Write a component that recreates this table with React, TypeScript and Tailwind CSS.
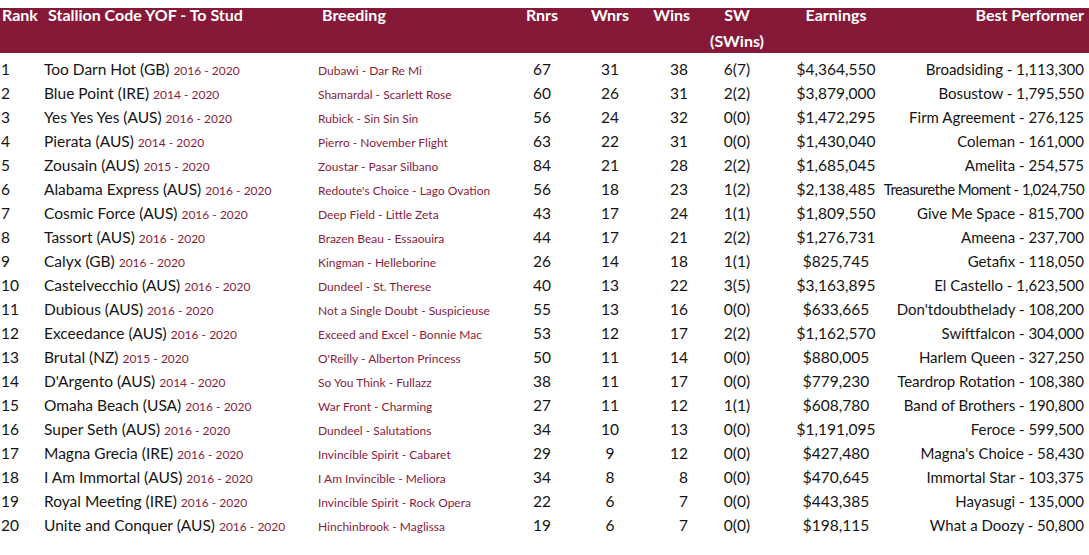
import React from 'react';

interface Row {
  rank: number;
  name: string;
  years: string;
  breeding: string;
  rnrs: number;
  wnrs: number;
  wins: number;
  sw: string;
  earnings: string;
  best: string;
  tight?: boolean;
}

const rows: Row[] = [
  { rank: 1, name: 'Too Darn Hot (GB)', years: '2016 - 2020', breeding: 'Dubawi - Dar Re Mi', rnrs: 67, wnrs: 31, wins: 38, sw: '6(7)', earnings: '$4,364,550', best: 'Broadsiding - 1,113,300' },
  { rank: 2, name: 'Blue Point (IRE)', years: '2014 - 2020', breeding: 'Shamardal - Scarlett Rose', rnrs: 60, wnrs: 26, wins: 31, sw: '2(2)', earnings: '$3,879,000', best: 'Bosustow - 1,795,550' },
  { rank: 3, name: 'Yes Yes Yes (AUS)', years: '2016 - 2020', breeding: 'Rubick - Sin Sin Sin', rnrs: 56, wnrs: 24, wins: 32, sw: '0(0)', earnings: '$1,472,295', best: 'Firm Agreement - 276,125' },
  { rank: 4, name: 'Pierata (AUS)', years: '2014 - 2020', breeding: 'Pierro - November Flight', rnrs: 63, wnrs: 22, wins: 31, sw: '0(0)', earnings: '$1,430,040', best: 'Coleman - 161,000' },
  { rank: 5, name: 'Zousain (AUS)', years: '2015 - 2020', breeding: 'Zoustar - Pasar Silbano', rnrs: 84, wnrs: 21, wins: 28, sw: '2(2)', earnings: '$1,685,045', best: 'Amelita - 254,575' },
  { rank: 6, name: 'Alabama Express (AUS)', years: '2016 - 2020', breeding: "Redoute's Choice - Lago Ovation", rnrs: 56, wnrs: 18, wins: 23, sw: '1(2)', earnings: '$2,138,485', best: 'Treasurethe Moment - 1,024,750', tight: true },
  { rank: 7, name: 'Cosmic Force (AUS)', years: '2016 - 2020', breeding: 'Deep Field - Little Zeta', rnrs: 43, wnrs: 17, wins: 24, sw: '1(1)', earnings: '$1,809,550', best: 'Give Me Space - 815,700' },
  { rank: 8, name: 'Tassort (AUS)', years: '2016 - 2020', breeding: 'Brazen Beau - Essaouira', rnrs: 44, wnrs: 17, wins: 21, sw: '2(2)', earnings: '$1,276,731', best: 'Ameena - 237,700' },
  { rank: 9, name: 'Calyx (GB)', years: '2016 - 2020', breeding: 'Kingman - Helleborine', rnrs: 26, wnrs: 14, wins: 18, sw: '1(1)', earnings: '$825,745', best: 'Getafix - 118,050' },
  { rank: 10, name: 'Castelvecchio (AUS)', years: '2016 - 2020', breeding: 'Dundeel - St. Therese', rnrs: 40, wnrs: 13, wins: 22, sw: '3(5)', earnings: '$3,163,895', best: 'El Castello - 1,623,500' },
  { rank: 11, name: 'Dubious (AUS)', years: '2016 - 2020', breeding: 'Not a Single Doubt - Suspicieuse', rnrs: 55, wnrs: 13, wins: 16, sw: '0(0)', earnings: '$633,665', best: "Don'tdoubthelady - 108,200" },
  { rank: 12, name: 'Exceedance (AUS)', years: '2016 - 2020', breeding: 'Exceed and Excel - Bonnie Mac', rnrs: 53, wnrs: 12, wins: 17, sw: '2(2)', earnings: '$1,162,570', best: 'Swiftfalcon - 304,000' },
  { rank: 13, name: 'Brutal (NZ)', years: '2015 - 2020', breeding: "O'Reilly - Alberton Princess", rnrs: 50, wnrs: 11, wins: 14, sw: '0(0)', earnings: '$880,005', best: 'Harlem Queen - 327,250' },
  { rank: 14, name: "D'Argento (AUS)", years: '2014 - 2020', breeding: 'So You Think - Fullazz', rnrs: 38, wnrs: 11, wins: 17, sw: '0(0)', earnings: '$779,230', best: 'Teardrop Rotation - 108,380' },
  { rank: 15, name: 'Omaha Beach (USA)', years: '2016 - 2020', breeding: 'War Front - Charming', rnrs: 27, wnrs: 11, wins: 12, sw: '1(1)', earnings: '$608,780', best: 'Band of Brothers - 190,800' },
  { rank: 16, name: 'Super Seth (AUS)', years: '2016 - 2020', breeding: 'Dundeel - Salutations', rnrs: 34, wnrs: 10, wins: 13, sw: '0(0)', earnings: '$1,191,095', best: 'Feroce - 599,500' },
  { rank: 17, name: 'Magna Grecia (IRE)', years: '2016 - 2020', breeding: 'Invincible Spirit - Cabaret', rnrs: 29, wnrs: 9, wins: 12, sw: '0(0)', earnings: '$427,480', best: "Magna's Choice - 58,430" },
  { rank: 18, name: 'I Am Immortal (AUS)', years: '2016 - 2020', breeding: 'I Am Invincible - Meliora', rnrs: 34, wnrs: 8, wins: 8, sw: '0(0)', earnings: '$470,645', best: 'Immortal Star - 103,375' },
  { rank: 19, name: 'Royal Meeting (IRE)', years: '2016 - 2020', breeding: 'Invincible Spirit - Rock Opera', rnrs: 22, wnrs: 6, wins: 7, sw: '0(0)', earnings: '$443,385', best: 'Hayasugi - 135,000' },
  { rank: 20, name: 'Unite and Conquer (AUS)', years: '2016 - 2020', breeding: 'Hinchinbrook - Maglissa', rnrs: 19, wnrs: 6, wins: 7, sw: '0(0)', earnings: '$198,115', best: 'What a Doozy - 50,800' },
];

const cols = 'grid grid-cols-[44px_274px_192px_64px_72px_44px_94px_104px_196px]';

const App = () => {
  return (
    <div className="w-[1089px] h-[555px] bg-white overflow-hidden pt-[8px] font-['Lato','Liberation_Sans',sans-serif]">
      {/* Header */}
      <div className={`${cols} h-[45px] bg-[#861937] text-white font-bold text-[16px] leading-[12px] pt-[1px]`}>
        <div className="pl-[2px]">Rank</div>
        <div className="pl-[4px]">Stallion Code YOF - To Stud</div>
        <div className="pl-[4px]">Breeding</div>
        <div className="text-center">Rnrs</div>
        <div className="text-center">Wnrs</div>
        <div className="text-right">Wins</div>
        <div className="text-center">
          <div>SW</div>
          <div className="mt-[14px]">(SWins)</div>
        </div>
        <div className="text-center">Earnings</div>
        <div className="text-right">Best Performer</div>
      </div>

      {/* Rows */}
      <div className="pt-[4px]">
        {rows.map((r) => (
          <div key={r.rank} className={`${cols} h-[24px] items-baseline leading-[24px] text-[15.5px] text-[#141414] whitespace-nowrap`}>
            <div className="pl-[1px]">{r.rank}</div>
            <div>
              {r.name} <span className="text-[12px] text-[#8a1c3c]">{r.years}</span>
            </div>
            <div className="text-[12px] text-[#8a1c3c]">{r.breeding}</div>
            <div className="text-center">{r.rnrs}</div>
            <div className="text-center">{r.wnrs}</div>
            <div className="text-right pr-[2px]">{r.wins}</div>
            <div className="text-center">{r.sw}</div>
            <div className="text-center">{r.earnings}</div>
            <div className={`flex justify-end text-[15px] ${r.tight ? 'tracking-[-0.6px]' : ''}`}>{r.best}</div>
          </div>
        ))}
      </div>
    </div>
  );
};

export default App;
